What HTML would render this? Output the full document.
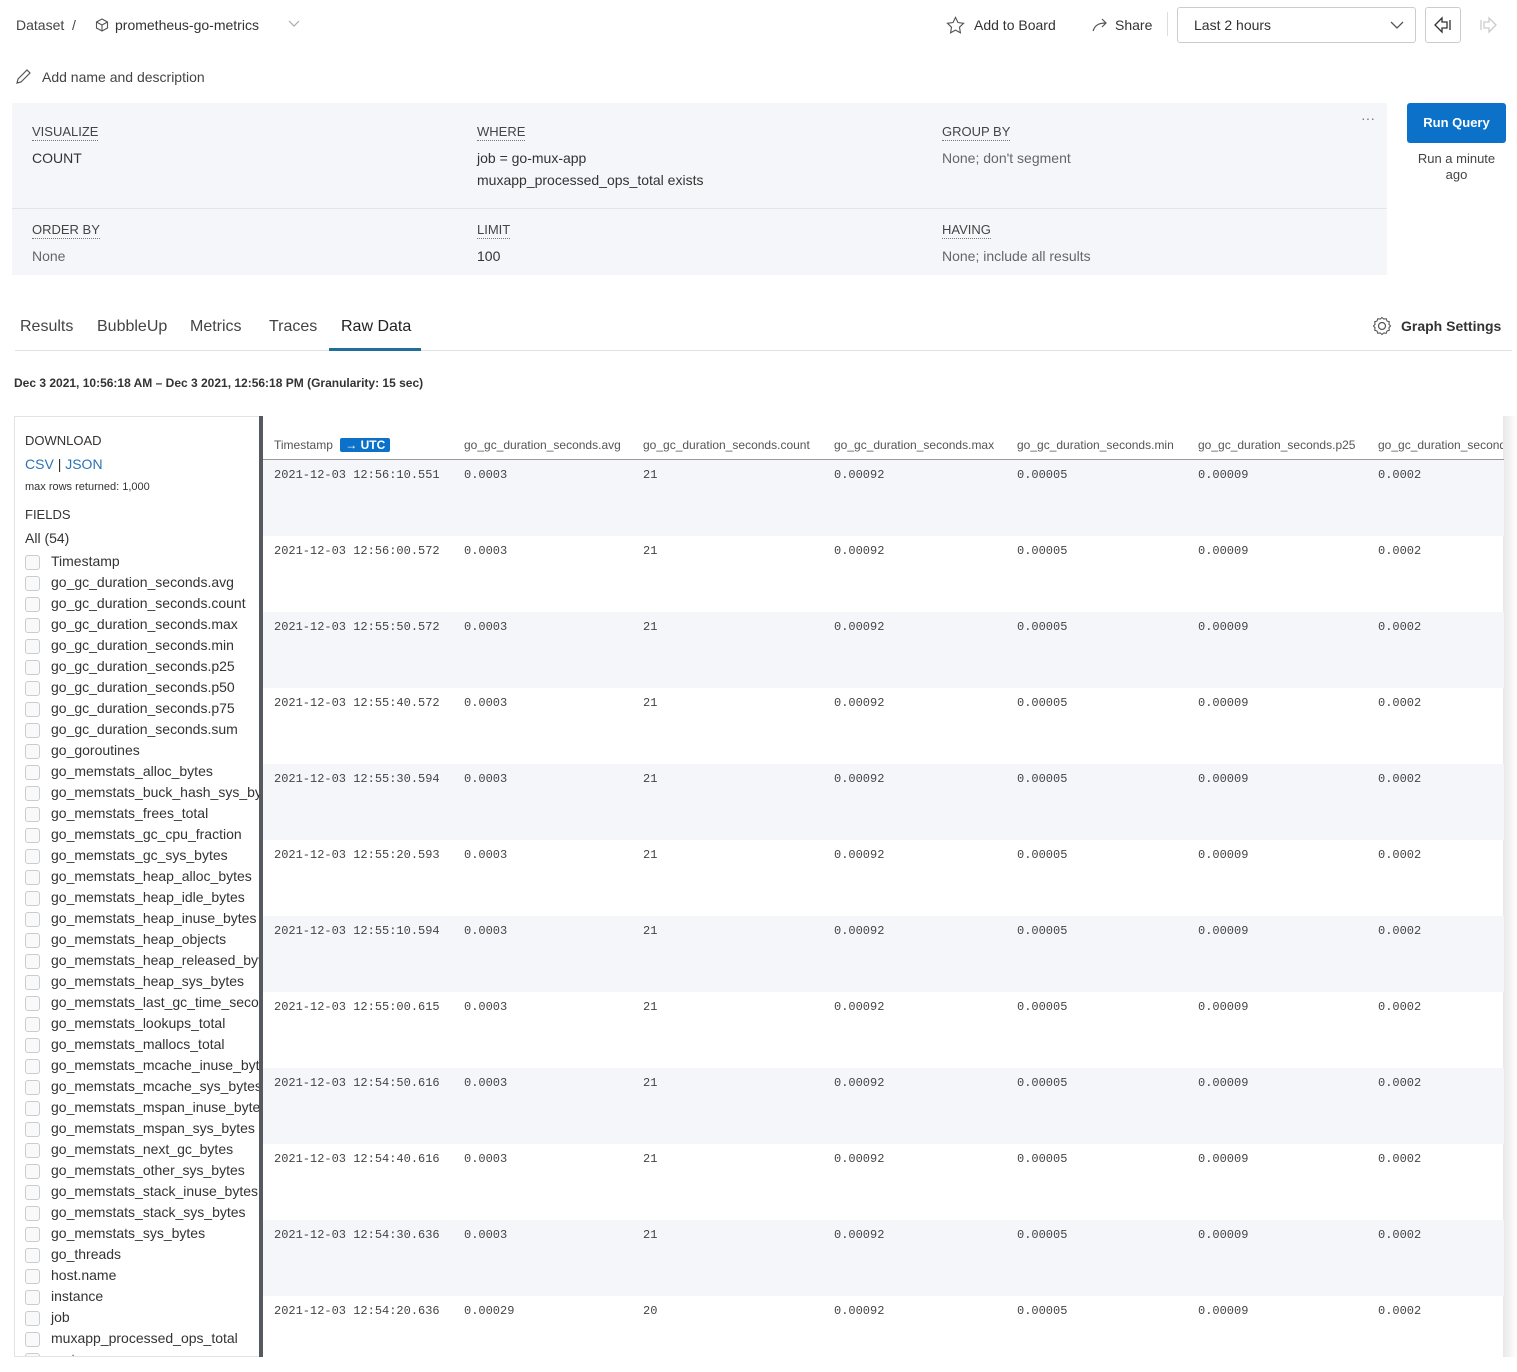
<!DOCTYPE html>
<html><head><meta charset="utf-8"><style>
*{box-sizing:border-box;margin:0;padding:0}
body{width:1517px;height:1357px;overflow:hidden;background:#fff;font-family:"Liberation Sans",Arial,sans-serif;color:#333;position:relative}
.a{position:absolute;white-space:nowrap}
.lbl{font-size:13px;color:#444;border-bottom:1px dotted #777;padding-bottom:1px}
.val{font-size:14px;color:#444}
.tab{font-size:16px;color:#444}
.sb{position:absolute;left:14px;top:416px;width:245px;height:941px;border:1px solid #e3e3e3;border-right:none;overflow:hidden}
.f{position:absolute;left:10px;font-size:14px;color:#333;white-space:nowrap}
.f i{position:absolute;left:0;top:2px;width:15px;height:15px;border:1px solid #ccc;border-radius:3px;background:#f8f9fa}
.f span{position:absolute;left:26px}
.row{position:absolute;left:263px;width:1241px;height:76px}
.row.s{background:#f4f6f9}
.c{position:absolute;top:8px;font-family:"Liberation Mono",monospace;font-size:12px;color:#444}
.h{position:absolute;top:438px;font-size:12px;color:#555;white-space:nowrap}
</style></head><body>
<div class="a" style="left:16px;top:17px;font-size:14px;color:#444">Dataset &nbsp;/</div>
<svg class="a" style="left:95px;top:18px" width="14" height="14" viewBox="0 0 14 14" fill="none" stroke="#555" stroke-width="1.1"><path d="M7 1L12.5 4v6L7 13 1.5 10V4z M1.5 4L7 7l5.5-3 M7 7v6"/></svg>
<div class="a" style="left:115px;top:17px;font-size:14px;color:#333">prometheus-go-metrics</div>
<svg class="a" style="left:288px;top:19px" width="12" height="10"><path d="M1 2l5 5 5-5" fill="none" stroke="#aaa" stroke-width="1.2"/></svg>

<svg class="a" style="left:946px;top:16px" width="19" height="18" viewBox="0 0 20 19"><path d="M10 1.5l2.6 5.4 5.9.8-4.3 4.1 1 5.9L10 14.9l-5.2 2.8 1-5.9L1.5 7.7l5.9-.8z" fill="none" stroke="#555" stroke-width="1.2"/></svg>
<div class="a" style="left:974px;top:17px;font-size:14px;color:#333">Add to Board</div>
<svg class="a" style="left:1092px;top:18px" width="16" height="14"><path d="M1 13C3 7 7 5 14 5M10 1l4 4-4 4" fill="none" stroke="#555" stroke-width="1.2"/></svg>
<div class="a" style="left:1115px;top:17px;font-size:14px;color:#333">Share</div>
<div class="a" style="left:1167px;top:12px;width:1px;height:24px;background:#ddd"></div>
<div class="a" style="left:1177px;top:7px;width:239px;height:36px;border:1px solid #ccc;border-radius:3px"></div>
<div class="a" style="left:1194px;top:17px;font-size:14px;color:#333">Last 2 hours</div>
<svg class="a" style="left:1390px;top:20px" width="14" height="10"><path d="M1 2l6 6 6-6" fill="none" stroke="#555" stroke-width="1.3"/></svg>
<div class="a" style="left:1425px;top:7px;width:36px;height:36px;border:1px solid #ccc;border-radius:3px"></div>
<svg class="a" style="left:1433px;top:16px" width="20" height="18"><path d="M2 9l7-7v4h5v6H9v4z M17 4v10" fill="none" stroke="#333" stroke-width="1.3"/></svg>
<svg class="a" style="left:1478px;top:16px" width="20" height="18"><path d="M18 9l-7-7v4H6v6h5v4z M3 4v10" fill="none" stroke="#ccc" stroke-width="1.3"/></svg>

<svg class="a" style="left:14px;top:68px" width="18" height="18"><path d="M3 15l1-4 9-9 3 3-9 9z" fill="none" stroke="#555" stroke-width="1.2"/></svg>
<div class="a" style="left:42px;top:69px;font-size:14px;color:#444">Add name and description</div>

<div class="a" style="left:12px;top:103px;width:1375px;height:172px;background:#f4f6f9"></div>
<div class="a" style="left:12px;top:208px;width:1375px;height:1px;background:#e2e5ea"></div>
<div class="a lbl" style="left:32px;top:124px">VISUALIZE</div>
<div class="a val" style="left:32px;top:150px;color:#333">COUNT</div>
<div class="a lbl" style="left:477px;top:124px">WHERE</div>
<div class="a val" style="left:477px;top:150px;color:#333">job = go-mux-app</div>
<div class="a val" style="left:477px;top:172px;color:#333">muxapp_processed_ops_total exists</div>
<div class="a lbl" style="left:942px;top:124px">GROUP BY</div>
<div class="a val" style="left:942px;top:150px;color:#666">None; don't segment</div>
<div class="a" style="left:1361px;top:110px;font-size:14px;color:#777">···</div>
<div class="a lbl" style="left:32px;top:222px">ORDER BY</div>
<div class="a val" style="left:32px;top:248px;color:#666">None</div>
<div class="a lbl" style="left:477px;top:222px">LIMIT</div>
<div class="a val" style="left:477px;top:248px;color:#333">100</div>
<div class="a lbl" style="left:942px;top:222px">HAVING</div>
<div class="a val" style="left:942px;top:248px;color:#666">None; include all results</div>

<div class="a" style="left:1407px;top:103px;width:99px;height:40px;background:#0c72c9;border-radius:3px;color:#fff;font-size:13px;font-weight:bold;text-align:center;line-height:40px">Run Query</div>
<div class="a" style="left:1407px;top:151px;width:99px;text-align:center;font-size:13px;color:#444;white-space:normal;line-height:16px">Run a minute ago</div>

<div class="a tab" style="left:20px;top:318px">Results</div>
<div class="a tab" style="left:97px;top:318px">BubbleUp</div>
<div class="a tab" style="left:190px;top:318px">Metrics</div>
<div class="a tab" style="left:269px;top:318px">Traces</div>
<div class="a tab" style="left:341px;top:318px;color:#222">Raw Data</div>
<div class="a" style="left:15px;top:350px;width:1497px;height:1px;background:#e2e2e2"></div>
<div class="a" style="left:329px;top:348px;width:92px;height:3px;background:#1f6f9a"></div>
<svg class="a" style="left:1372px;top:316px" width="20" height="20" viewBox="0 0 20 20"><circle cx="10" cy="10" r="3.5" fill="none" stroke="#555" stroke-width="1.2"/><path d="M10 1.5l1.8 1.6 2.4-.4.8 2.3 2.3.8-.4 2.4 1.6 1.8-1.6 1.8.4 2.4-2.3.8-.8 2.3-2.4-.4L10 18.5l-1.8-1.6-2.4.4-.8-2.3-2.3-.8.4-2.4L1.5 10l1.6-1.8-.4-2.4 2.3-.8.8-2.3 2.4.4z" fill="none" stroke="#555" stroke-width="1.1"/></svg>
<div class="a" style="left:1401px;top:318px;font-size:14px;color:#333;font-weight:bold">Graph Settings</div>

<div class="a" style="left:14px;top:376px;font-size:12px;font-weight:bold;color:#333">Dec 3 2021, 10:56:18 AM – Dec 3 2021, 12:56:18 PM (Granularity: 15 sec)</div>

<div class="sb">
<div class="a" style="left:10px;top:16px;font-size:13px;color:#333">DOWNLOAD</div>
<div class="a" style="left:10px;top:39px;font-size:14px;color:#2a74b5">CSV <span style="color:#333">|</span> JSON</div>
<div class="a" style="left:10px;top:64px;font-size:11px;color:#333">max rows returned: 1,000</div>
<div class="a" style="left:10px;top:90px;font-size:13px;color:#333">FIELDS</div>
<div class="a" style="left:10px;top:113px;font-size:14px;color:#333">All (54)</div>
<div class="f" style="top:136px"><i></i><span>Timestamp</span></div>
<div class="f" style="top:157px"><i></i><span>go_gc_duration_seconds.avg</span></div>
<div class="f" style="top:178px"><i></i><span>go_gc_duration_seconds.count</span></div>
<div class="f" style="top:199px"><i></i><span>go_gc_duration_seconds.max</span></div>
<div class="f" style="top:220px"><i></i><span>go_gc_duration_seconds.min</span></div>
<div class="f" style="top:241px"><i></i><span>go_gc_duration_seconds.p25</span></div>
<div class="f" style="top:262px"><i></i><span>go_gc_duration_seconds.p50</span></div>
<div class="f" style="top:283px"><i></i><span>go_gc_duration_seconds.p75</span></div>
<div class="f" style="top:304px"><i></i><span>go_gc_duration_seconds.sum</span></div>
<div class="f" style="top:325px"><i></i><span>go_goroutines</span></div>
<div class="f" style="top:346px"><i></i><span>go_memstats_alloc_bytes</span></div>
<div class="f" style="top:367px"><i></i><span>go_memstats_buck_hash_sys_bytes</span></div>
<div class="f" style="top:388px"><i></i><span>go_memstats_frees_total</span></div>
<div class="f" style="top:409px"><i></i><span>go_memstats_gc_cpu_fraction</span></div>
<div class="f" style="top:430px"><i></i><span>go_memstats_gc_sys_bytes</span></div>
<div class="f" style="top:451px"><i></i><span>go_memstats_heap_alloc_bytes</span></div>
<div class="f" style="top:472px"><i></i><span>go_memstats_heap_idle_bytes</span></div>
<div class="f" style="top:493px"><i></i><span>go_memstats_heap_inuse_bytes</span></div>
<div class="f" style="top:514px"><i></i><span>go_memstats_heap_objects</span></div>
<div class="f" style="top:535px"><i></i><span>go_memstats_heap_released_bytes</span></div>
<div class="f" style="top:556px"><i></i><span>go_memstats_heap_sys_bytes</span></div>
<div class="f" style="top:577px"><i></i><span>go_memstats_last_gc_time_seconds</span></div>
<div class="f" style="top:598px"><i></i><span>go_memstats_lookups_total</span></div>
<div class="f" style="top:619px"><i></i><span>go_memstats_mallocs_total</span></div>
<div class="f" style="top:640px"><i></i><span>go_memstats_mcache_inuse_bytes</span></div>
<div class="f" style="top:661px"><i></i><span>go_memstats_mcache_sys_bytes</span></div>
<div class="f" style="top:682px"><i></i><span>go_memstats_mspan_inuse_bytes</span></div>
<div class="f" style="top:703px"><i></i><span>go_memstats_mspan_sys_bytes</span></div>
<div class="f" style="top:724px"><i></i><span>go_memstats_next_gc_bytes</span></div>
<div class="f" style="top:745px"><i></i><span>go_memstats_other_sys_bytes</span></div>
<div class="f" style="top:766px"><i></i><span>go_memstats_stack_inuse_bytes</span></div>
<div class="f" style="top:787px"><i></i><span>go_memstats_stack_sys_bytes</span></div>
<div class="f" style="top:808px"><i></i><span>go_memstats_sys_bytes</span></div>
<div class="f" style="top:829px"><i></i><span>go_threads</span></div>
<div class="f" style="top:850px"><i></i><span>host.name</span></div>
<div class="f" style="top:871px"><i></i><span>instance</span></div>
<div class="f" style="top:892px"><i></i><span>job</span></div>
<div class="f" style="top:913px"><i></i><span>muxapp_processed_ops_total</span></div>
<div class="f" style="top:934px"><i></i><span>port</span></div>
</div>
<div class="a" style="left:259px;top:416px;width:4px;height:941px;background:#555a60"></div>
<div class="a" style="left:1503px;top:416px;width:14px;height:941px;background:linear-gradient(90deg,#e8e8e8,#fff)"></div>

<div class="h" style="left:274px">Timestamp <span style="display:inline-block;margin-left:4px;background:#0c72c9;color:#fff;font-weight:bold;border-radius:2px;padding:0 5px;line-height:14px">→ UTC</span></div>
<div class="h" style="left:464px">go_gc_duration_seconds.avg</div>
<div class="h" style="left:643px">go_gc_duration_seconds.count</div>
<div class="h" style="left:834px">go_gc_duration_seconds.max</div>
<div class="h" style="left:1017px">go_gc_duration_seconds.min</div>
<div class="h" style="left:1198px">go_gc_duration_seconds.p25</div>
<div class="h" style="left:1378px;width:125px;overflow:hidden">go_gc_duration_seconds.p50</div>
<div class="a" style="left:263px;top:459px;width:1241px;height:1px;background:#999"></div>

<div class="row s" style="top:460px"><div class="c" style="left:11px">2021-12-03 12:56:10.551</div><div class="c" style="left:201px">0.0003</div><div class="c" style="left:380px">21</div><div class="c" style="left:571px">0.00092</div><div class="c" style="left:754px">0.00005</div><div class="c" style="left:935px">0.00009</div><div class="c" style="left:1115px">0.0002</div></div>
<div class="row" style="top:536px"><div class="c" style="left:11px">2021-12-03 12:56:00.572</div><div class="c" style="left:201px">0.0003</div><div class="c" style="left:380px">21</div><div class="c" style="left:571px">0.00092</div><div class="c" style="left:754px">0.00005</div><div class="c" style="left:935px">0.00009</div><div class="c" style="left:1115px">0.0002</div></div>
<div class="row s" style="top:612px"><div class="c" style="left:11px">2021-12-03 12:55:50.572</div><div class="c" style="left:201px">0.0003</div><div class="c" style="left:380px">21</div><div class="c" style="left:571px">0.00092</div><div class="c" style="left:754px">0.00005</div><div class="c" style="left:935px">0.00009</div><div class="c" style="left:1115px">0.0002</div></div>
<div class="row" style="top:688px"><div class="c" style="left:11px">2021-12-03 12:55:40.572</div><div class="c" style="left:201px">0.0003</div><div class="c" style="left:380px">21</div><div class="c" style="left:571px">0.00092</div><div class="c" style="left:754px">0.00005</div><div class="c" style="left:935px">0.00009</div><div class="c" style="left:1115px">0.0002</div></div>
<div class="row s" style="top:764px"><div class="c" style="left:11px">2021-12-03 12:55:30.594</div><div class="c" style="left:201px">0.0003</div><div class="c" style="left:380px">21</div><div class="c" style="left:571px">0.00092</div><div class="c" style="left:754px">0.00005</div><div class="c" style="left:935px">0.00009</div><div class="c" style="left:1115px">0.0002</div></div>
<div class="row" style="top:840px"><div class="c" style="left:11px">2021-12-03 12:55:20.593</div><div class="c" style="left:201px">0.0003</div><div class="c" style="left:380px">21</div><div class="c" style="left:571px">0.00092</div><div class="c" style="left:754px">0.00005</div><div class="c" style="left:935px">0.00009</div><div class="c" style="left:1115px">0.0002</div></div>
<div class="row s" style="top:916px"><div class="c" style="left:11px">2021-12-03 12:55:10.594</div><div class="c" style="left:201px">0.0003</div><div class="c" style="left:380px">21</div><div class="c" style="left:571px">0.00092</div><div class="c" style="left:754px">0.00005</div><div class="c" style="left:935px">0.00009</div><div class="c" style="left:1115px">0.0002</div></div>
<div class="row" style="top:992px"><div class="c" style="left:11px">2021-12-03 12:55:00.615</div><div class="c" style="left:201px">0.0003</div><div class="c" style="left:380px">21</div><div class="c" style="left:571px">0.00092</div><div class="c" style="left:754px">0.00005</div><div class="c" style="left:935px">0.00009</div><div class="c" style="left:1115px">0.0002</div></div>
<div class="row s" style="top:1068px"><div class="c" style="left:11px">2021-12-03 12:54:50.616</div><div class="c" style="left:201px">0.0003</div><div class="c" style="left:380px">21</div><div class="c" style="left:571px">0.00092</div><div class="c" style="left:754px">0.00005</div><div class="c" style="left:935px">0.00009</div><div class="c" style="left:1115px">0.0002</div></div>
<div class="row" style="top:1144px"><div class="c" style="left:11px">2021-12-03 12:54:40.616</div><div class="c" style="left:201px">0.0003</div><div class="c" style="left:380px">21</div><div class="c" style="left:571px">0.00092</div><div class="c" style="left:754px">0.00005</div><div class="c" style="left:935px">0.00009</div><div class="c" style="left:1115px">0.0002</div></div>
<div class="row s" style="top:1220px"><div class="c" style="left:11px">2021-12-03 12:54:30.636</div><div class="c" style="left:201px">0.0003</div><div class="c" style="left:380px">21</div><div class="c" style="left:571px">0.00092</div><div class="c" style="left:754px">0.00005</div><div class="c" style="left:935px">0.00009</div><div class="c" style="left:1115px">0.0002</div></div>
<div class="row" style="top:1296px"><div class="c" style="left:11px">2021-12-03 12:54:20.636</div><div class="c" style="left:201px">0.00029</div><div class="c" style="left:380px">20</div><div class="c" style="left:571px">0.00092</div><div class="c" style="left:754px">0.00005</div><div class="c" style="left:935px">0.00009</div><div class="c" style="left:1115px">0.0002</div></div>
</body></html>
